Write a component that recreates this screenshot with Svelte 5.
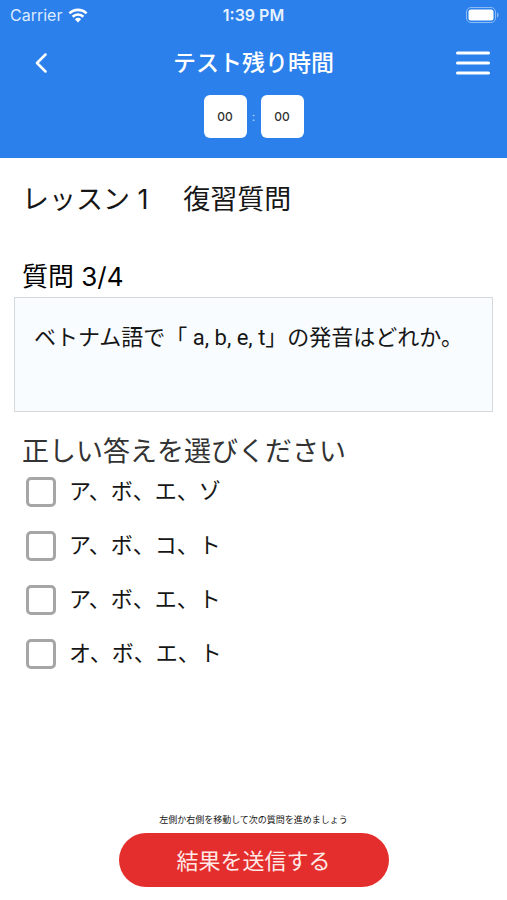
<script>
  let lesson = "レッスン 1　 復習質問";
  let current = 3;
  let total = 4;
  let minutes = "00";
  let seconds = "00";
  let question = "ベトナム語で「 a, b, e, t」の発音はどれか。";

  let answers = [
    { text: "ア、ボ、エ、ゾ", checked: false },
    { text: "ア、ボ、コ、ト", checked: false },
    { text: "ア、ボ、エ、ト", checked: false },
    { text: "オ、ボ、エ、ト", checked: false },
  ];
</script>

<div class="screen" lang="ja">
  <header>
    <div class="status">
      <div class="carrier">
        <span>Carrier</span>
        <svg class="wifi" viewBox="0 0 20 15" fill="none">
          <path d="M1.4 5.4a12.3 12.3 0 0 1 17.2 0" />
          <path d="M4.6 8.7a7.7 7.7 0 0 1 10.8 0" />
          <path class="dot" d="M10 14.4 6.9 11.3a4.5 4.5 0 0 1 6.2 0z" />
        </svg>
      </div>
      <span class="clock">1:39 PM</span>
      <svg class="battery" viewBox="0 0 33 16" fill="none">
        <rect class="shell" x="0.5" y="0.5" width="29" height="15" rx="4.5" />
        <rect class="level" x="2.5" y="2.5" width="25" height="11" rx="2.5" />
        <path class="cap" d="M31 5.5c2 .8 2 4.2 0 5z" />
      </svg>
    </div>

    <div class="nav">
      <button class="back" aria-label="戻る">
        <svg viewBox="0 0 12 20" fill="none">
          <path d="M10.5 1.5 2 10l8.5 8.5" />
        </svg>
      </button>
      <h1>テスト残り時間</h1>
      <button class="menu" aria-label="メニュー">
        <svg viewBox="0 0 34 24" fill="none">
          <path d="M1.5 2h31M1.5 12h31M1.5 22h31" />
        </svg>
      </button>
    </div>

    <div class="timer">
      <span class="digits">{minutes}</span>
      <span class="colon">:</span>
      <span class="digits">{seconds}</span>
    </div>
  </header>

  <main>
    <h2 class="lesson">{lesson}</h2>
    <h3 class="counter">質問 {current}/{total}</h3>
    <p class="question">{question}</p>
    <fieldset>
      <legend>正しい答えを選びください</legend>
      {#each answers as answer}
        <label>
          <input type="checkbox" bind:checked={answer.checked} />
          <span>{answer.text}</span>
        </label>
      {/each}
    </fieldset>
  </main>

  <footer>
    <p>左側か右側を移動して次の質問を進めましょう</p>
    <button class="submit">結果を送信する</button>
  </footer>
</div>

<style>
  :global(body) {
    margin: 0;
    background: #fff;
  }

  .screen {
    min-height: 100vh;
    display: flex;
    flex-direction: column;
    background: #fff;
    color: #161616;
    font-family: Inter, "Noto Sans CJK JP", sans-serif;
  }

  header {
    background: #2b80ec;
    color: #fff;
    padding-bottom: 20px;
  }

  .status {
    display: grid;
    grid-template-columns: 1fr auto 1fr;
    align-items: center;
    height: 30px;
    padding: 0 8px;
    font-size: 16px;
  }

  .carrier {
    display: flex;
    align-items: center;
    gap: 6px;
    padding-left: 2px;
    color: #dcebff;
  }

  .clock {
    font-weight: 600;
    color: #e6f1ff;
  }

  .wifi {
    width: 20px;
    height: 15px;
    stroke: #fff;
    stroke-width: 2.6;
  }

  .wifi .dot {
    fill: #fff;
    stroke: none;
  }

  .battery {
    width: 33px;
    height: 16px;
    justify-self: end;
  }

  .shell {
    stroke: #8dbbf6;
  }

  .level {
    fill: #fff;
  }

  .cap {
    fill: #8dbbf6;
  }

  .nav {
    display: grid;
    grid-template-columns: 1fr auto 1fr;
    align-items: center;
    height: 65px;
    padding: 0 17px;
  }

  button {
    border: none;
    padding: 0;
    background: none;
    font-family: inherit;
    cursor: pointer;
  }

  .nav svg {
    display: block;
    stroke: #fff;
    stroke-linecap: round;
    stroke-linejoin: round;
  }

  .back {
    justify-self: start;
    padding: 0 18px;
  }

  .back svg {
    width: 12px;
    height: 20px;
    stroke-width: 2.5;
  }

  .menu {
    justify-self: end;
  }

  .menu svg {
    width: 34px;
    height: 24px;
    stroke-width: 3;
  }

  h1 {
    margin: 0;
    font-size: 23px;
    font-weight: 500;
    line-height: 32px;
  }

  .timer {
    display: flex;
    justify-content: center;
    align-items: center;
  }

  .digits {
    width: 43px;
    height: 43px;
    border-radius: 6px;
    background: #fff;
    color: #333;
    font-size: 12px;
    font-weight: 500;
    line-height: 44px;
    text-align: center;
  }

  .colon {
    width: 14px;
    color: #b9d6fb;
    font-size: 12px;
    text-align: center;
  }

  main {
    padding: 22px 14px;
  }

  h2,
  h3,
  legend {
    margin: 0;
    padding: 0 8px;
    font-size: 27px;
    font-weight: 400;
    line-height: 40px;
  }

  .counter {
    margin-top: 37px;
    font-size: 26px;
    color: #000;
  }

  .question {
    box-sizing: border-box;
    min-height: 115px;
    margin: 0 0 20px;
    padding: 24px 19px;
    border: 1px solid #d5d9dc;
    background: #f8fcff;
    font-family: Roboto, "Noto Sans CJK JP", sans-serif;
    font-size: 22px;
    line-height: 32px;
  }

  fieldset {
    margin: 0;
    padding: 0;
    border: none;
  }

  legend {
    margin-bottom: 5px;
    color: #333;
  }

  label {
    display: flex;
    align-items: center;
    gap: 13px;
    height: 30px;
    margin-bottom: 24px;
    padding-left: 12px;
    font-size: 22px;
    line-height: 30px;
    cursor: pointer;
  }

  label span {
    padding-bottom: 2px;
  }

  input {
    appearance: none;
    box-sizing: border-box;
    width: 30px;
    height: 30px;
    margin: 0;
    border: 3px solid #a6a6a6;
    border-radius: 5px;
    background: #fff;
  }

  input:checked {
    background: #2b80ec;
  }

  footer {
    margin-top: auto;
    padding: 0 20px 13px;
    text-align: center;
  }

  footer p {
    margin: 0 0 5px;
    font-size: 9px;
    line-height: 16px;
  }

  .submit {
    width: 270px;
    max-width: 100%;
    height: 54px;
    padding-bottom: 2px;
    border-radius: 27px;
    background: #e42e2d;
    color: #ffe9e7;
    font-size: 22px;
  }
</style>
